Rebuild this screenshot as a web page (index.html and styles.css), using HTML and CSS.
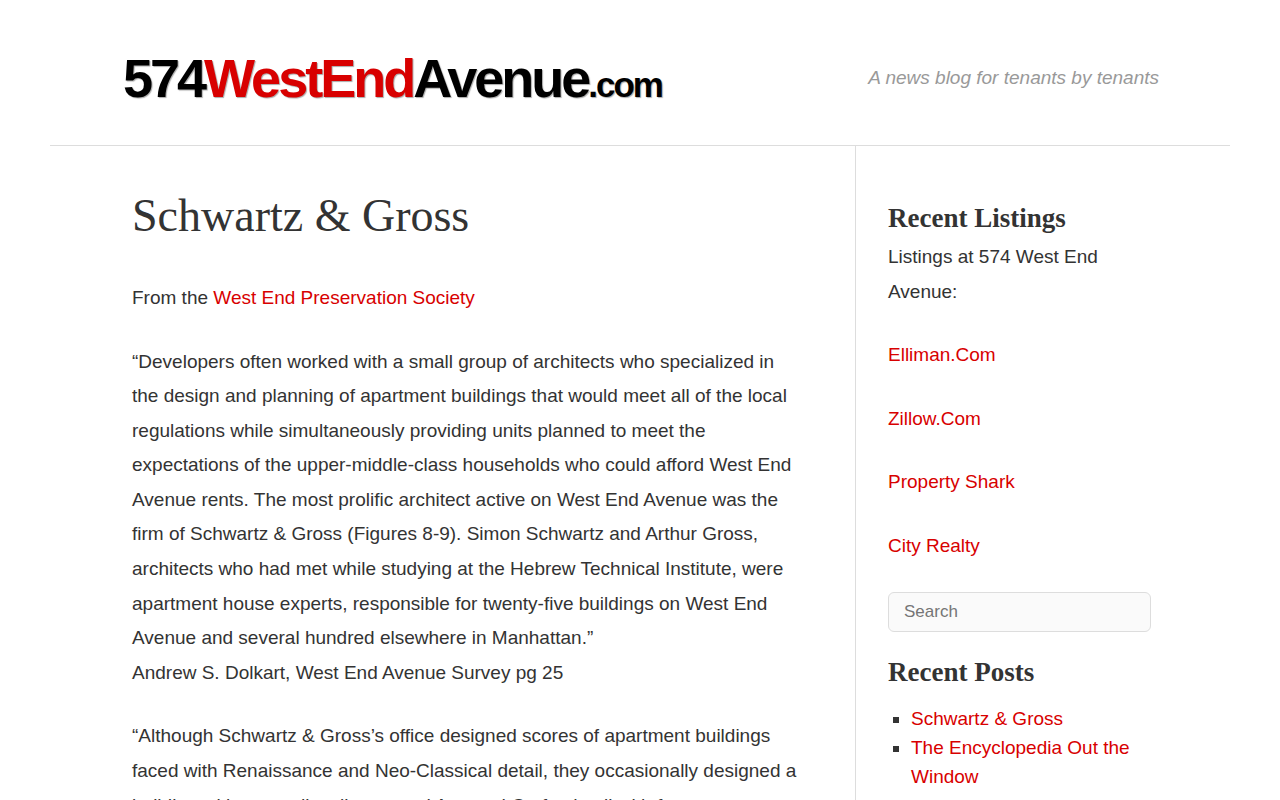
FILE: index.html
```
<!DOCTYPE html>
<html lang="en">
<head>
    <meta charset="UTF-8">
    <meta name="viewport" content="width=device-width, initial-scale=1.0">
    <title>Schwartz &amp; Gross | 574WestEndAvenue.com</title>
    <link rel="stylesheet" href="styles.css">
</head>
<body>
<div class="page">
    <header class="site-header">
        <a class="logo" href="#">574<span class="red">WestEnd</span>Avenue<span class="dotcom">.com</span></a>
        <p class="tagline">A news blog for tenants by tenants</p>
    </header>

    <div class="columns">
        <main class="content">
            <h1>Schwartz &amp; Gross</h1>
            <p>From the <a href="#">West End Preservation Society</a></p>
            <p>“Developers often worked with a small group of architects who specialized in the design and planning of apartment buildings that would meet all of the local regulations while simultaneously providing units planned to meet the expectations of the upper-middle-class households who could afford West End Avenue rents. The most prolific architect active on West End Avenue was the firm of Schwartz &amp; Gross (Figures 8-9). Simon Schwartz and Arthur Gross, architects who had met while studying at the Hebrew Technical Institute, were apartment house experts, responsible for twenty-five buildings on West End Avenue and several hundred elsewhere in Manhattan.”<br>
            Andrew S. Dolkart, West End Avenue Survey pg 25</p>
            <p>“Although Schwartz &amp; Gross’s office designed scores of apartment buildings faced with Renaissance and Neo-Classical detail, they occasionally designed a building without medievally sourced Arts and Crafts detail with features</p>
        </main>

        <aside class="sidebar">
            <section class="widget">
                <h2>Recent Listings</h2>
                <p>Listings at 574 West End Avenue:</p>
                <p><a href="#">Elliman.Com</a></p>
                <p><a href="#">Zillow.Com</a></p>
                <p><a href="#">Property Shark</a></p>
                <p><a href="#">City Realty</a></p>
            </section>
            <form class="search">
                <input type="search" name="s" placeholder="Search" aria-label="Search">
            </form>
            <section class="widget">
                <h2>Recent Posts</h2>
                <ul>
                    <li><a href="#">Schwartz &amp; Gross</a></li>
                    <li><a href="#">The Encyclopedia Out the Window</a></li>
                </ul>
            </section>
        </aside>
    </div>
</div>
</body>
</html>
```
FILE: styles.css
```
* {
    box-sizing: border-box;
    margin: 0;
    padding: 0;
}
body {
    background: #fff;
    color: #333;
    font-family: Arial, "Liberation Sans", sans-serif;
    font-size: 19px;
    line-height: 1.82;
}
/* no scrollbar gutter */
html {
    scrollbar-width: none;
}
a {
    color: #d80000;
    text-decoration: none;
}
.page {
    max-width: 1180px;
    margin: 0 auto;
}

/* header */
.site-header {
    display: flex;
    justify-content: space-between;
    align-items: center;
    padding: 46px 71px 35px 73px;
    border-bottom: 1px solid #ddd;
}
.logo {
    color: #000;
    font-size: 54px;
    font-weight: bold;
    line-height: 64px;
    letter-spacing: -3px;
    text-shadow: 1px 1px 1px #aaa;
}
.logo .red {
    color: #d80000;
}
.logo .dotcom {
    font-size: 35px;
    line-height: 1;
    letter-spacing: -2px;
}
.tagline {
    color: #999;
    font-style: italic;
}

/* columns */
.columns {
    display: flex;
}
.content {
    flex: 1;
    padding: 40px 54px 0 82px;
}
.content h1 {
    margin-bottom: 35px;
    font-family: "Times New Roman", "Liberation Serif", serif;
    font-size: 46px;
    font-weight: normal;
    line-height: 60px;
}
.content p {
    margin-bottom: 29px;
}
.sidebar {
    width: 375px;
    padding: 54px 79px 0 32px;
    border-left: 1px solid #ddd;
}
.widget h2 {
    margin-bottom: 4px;
    font-family: "Times New Roman", "Liberation Serif", serif;
    font-size: 27px;
    line-height: 36px;
}
.widget p {
    margin-bottom: 29px;
}
.widget ul {
    margin-top: 14px;
    padding-left: 23px;
    line-height: 29px;
    list-style: square;
}
.search {
    margin-bottom: 22px;
}
.search input {
    display: block;
    width: 100%;
    height: 40px;
    padding: 0 15px;
    border: 1px solid #ddd;
    border-radius: 6px;
    background: #fafafa;
    color: #333;
    font-family: inherit;
    font-size: 17px;
    appearance: none;
}
```
